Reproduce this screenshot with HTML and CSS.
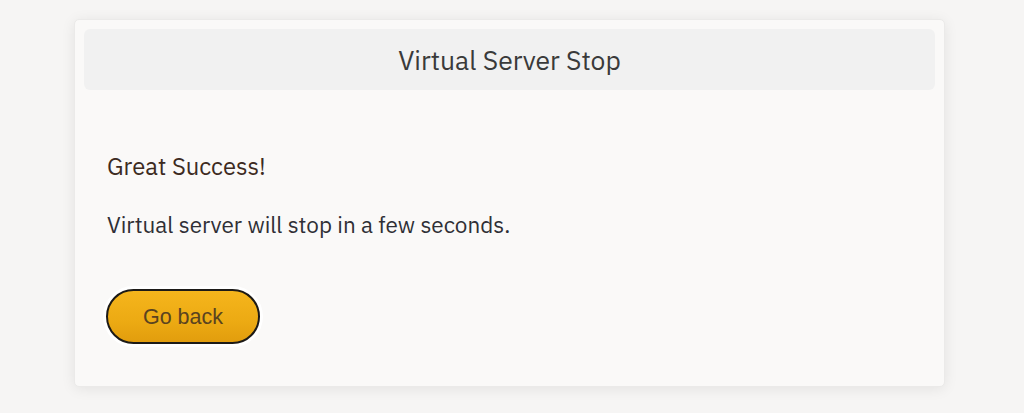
FILE: index.html
```html
<!DOCTYPE html>
<html lang="en">
<head>
<meta charset="utf-8">
<title>Virtual Server Stop</title>
<link rel="stylesheet" href="styles.css">
</head>
<body>
<main class="card">
  <header class="card-header">
    <h1 class="title">Virtual Server Stop</h1>
  </header>
  <section class="card-body">
    <p class="success">Great Success!</p>
    <p class="message">Virtual server will stop in a few seconds.</p>
    <button class="btn" type="button">Go back</button>
  </section>
</main>
</body>
</html>
```
FILE: styles.css
```css
html, body {
  margin: 0;
  padding: 0;
}
body {
  background: #f6f5f4;
  font-family: "IBM Plex Sans", Roboto, "Noto Sans", sans-serif;
  padding: 19px 79px 26px 74px;
}
.card {
  background: #faf9f8;
  border: 1px solid #ebeae9;
  border-radius: 5px;
  box-shadow: 0 2px 14px rgba(0, 0, 0, 0.08);
  padding: 9px 9px 0 9px;
  height: 368px;
  box-sizing: border-box;
}
.card-header {
  background: #f1f1f1;
  border-radius: 6px;
  height: 61px;
  display: flex;
  align-items: center;
  justify-content: center;
}
.title {
  margin: 0;
  font-weight: 400;
  font-size: 26.5px;
  color: #3a3a3a;
}
.card-body {
  padding: 59px 23px 0 23px;
}
.success {
  margin: 0;
  font-size: 23.8px;
  font-weight: 400;
  line-height: 36px;
  color: #3d2b1f;
}
.message {
  margin: 22px 0 0 0;
  font-size: 22.5px;
  line-height: 36px;
  color: #2f2f35;
}
.btn {
  margin: 46px 0 0 -1px;
  width: 154px;
  height: 55px;
  border: 2px solid #1c1a17;
  border-radius: 28px;
  background: linear-gradient(#f5b51c, #ecaa13 60%, #e29d0d);
  font-family: "Liberation Sans", Arial, sans-serif;
  font-size: 21.5px;
  color: #5a4320;
  padding-top: 3px;
  cursor: pointer;
  box-shadow: 0 0 0 3px #ffffff;
}
```
